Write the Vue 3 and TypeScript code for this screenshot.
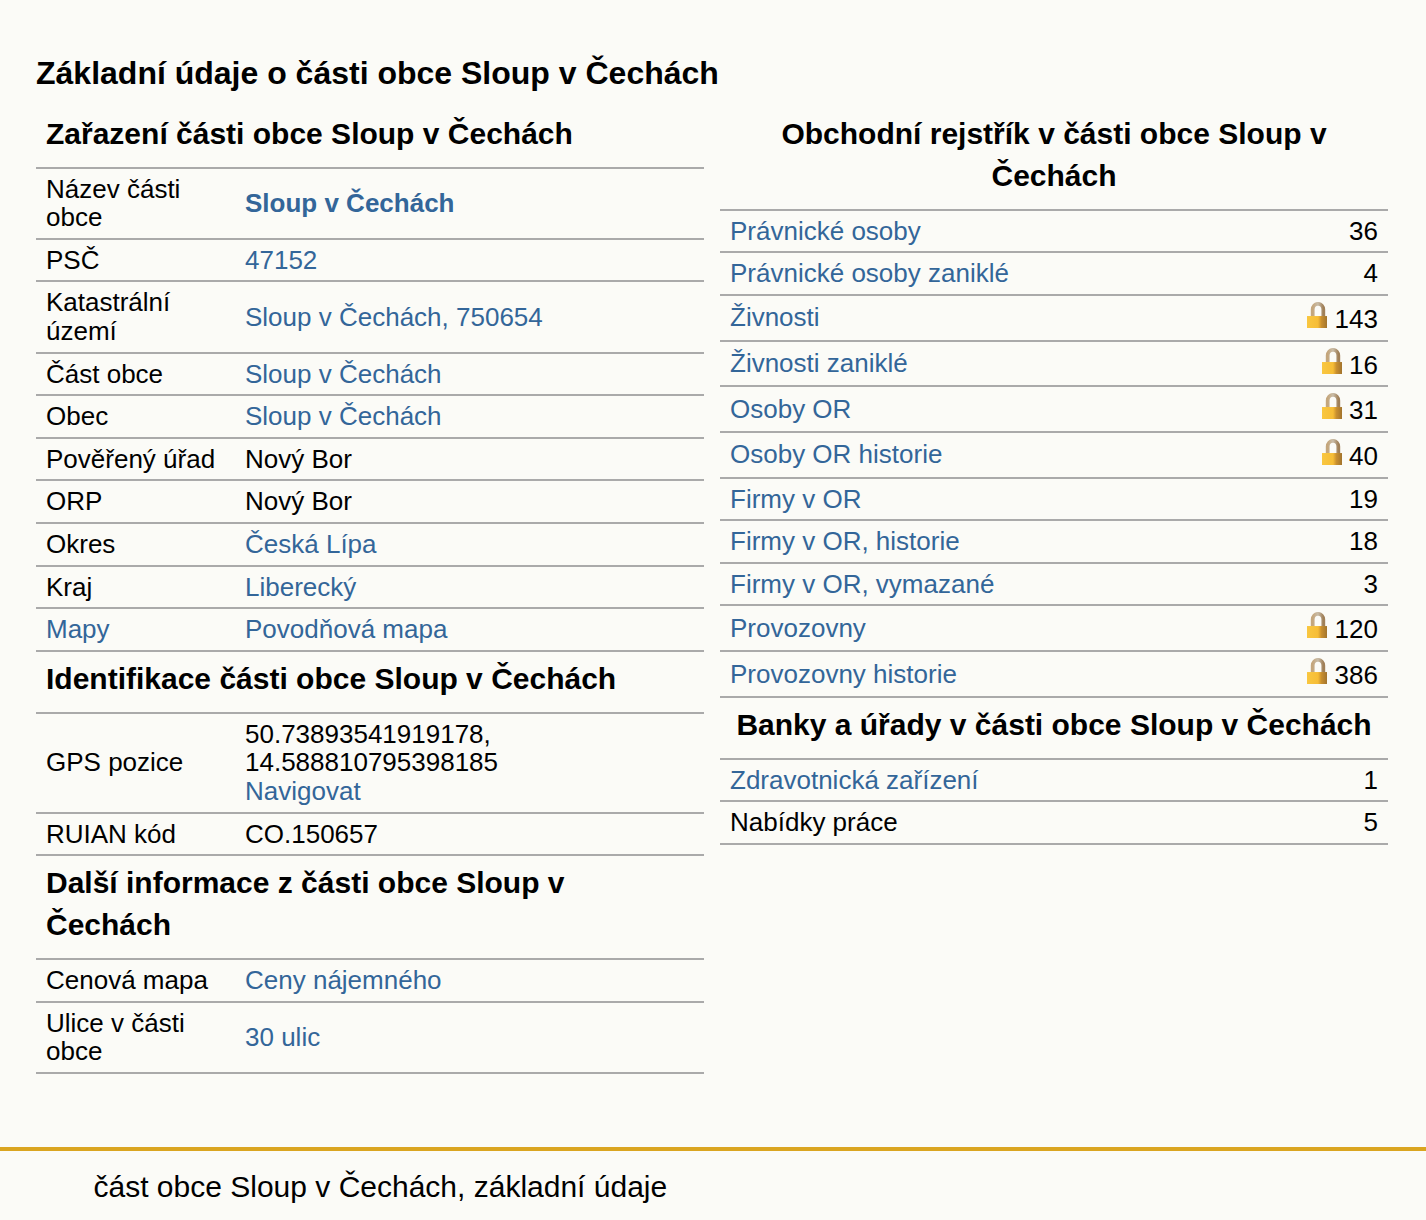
<script setup lang="ts">
type Row = { label: string; labelLink?: boolean; value: string; link?: boolean; bold?: boolean; extra?: string };
type Stat = { label: string; link?: boolean; count: number; lock?: boolean };

const zarazeni: Row[] = [
  { label: 'Název části obce', value: 'Sloup v Čechách', link: true, bold: true },
  { label: 'PSČ', value: '47152', link: true },
  { label: 'Katastrální území', value: 'Sloup v Čechách, 750654', link: true },
  { label: 'Část obce', value: 'Sloup v Čechách', link: true },
  { label: 'Obec', value: 'Sloup v Čechách', link: true },
  { label: 'Pověřený úřad', value: 'Nový Bor' },
  { label: 'ORP', value: 'Nový Bor' },
  { label: 'Okres', value: 'Česká Lípa', link: true },
  { label: 'Kraj', value: 'Liberecký', link: true },
  { label: 'Mapy', labelLink: true, value: 'Povodňová mapa', link: true },
];
const identifikace: Row[] = [
  { label: 'GPS pozice', value: '50.73893541919178, 14.588810795398185', extra: 'Navigovat' },
  { label: 'RUIAN kód', value: 'CO.150657' },
];
const dalsi: Row[] = [
  { label: 'Cenová mapa', value: 'Ceny nájemného', link: true },
  { label: 'Ulice v části obce', value: '30 ulic', link: true },
];
const rejstrik: Stat[] = [
  { label: 'Právnické osoby', link: true, count: 36 },
  { label: 'Právnické osoby zaniklé', link: true, count: 4 },
  { label: 'Živnosti', link: true, count: 143, lock: true },
  { label: 'Živnosti zaniklé', link: true, count: 16, lock: true },
  { label: 'Osoby OR', link: true, count: 31, lock: true },
  { label: 'Osoby OR historie', link: true, count: 40, lock: true },
  { label: 'Firmy v OR', link: true, count: 19 },
  { label: 'Firmy v OR, historie', link: true, count: 18 },
  { label: 'Firmy v OR, vymazané', link: true, count: 3 },
  { label: 'Provozovny', link: true, count: 120, lock: true },
  { label: 'Provozovny historie', link: true, count: 386, lock: true },
];
const banky: Stat[] = [
  { label: 'Zdravotnická zařízení', link: true, count: 1 },
  { label: 'Nabídky práce', count: 5 },
];
const groupsLeft = [
  { title: 'Zařazení části obce Sloup v Čechách', rows: zarazeni },
  { title: 'Identifikace části obce Sloup v Čechách', rows: identifikace },
  { title: 'Další informace z části obce Sloup v Čechách', rows: dalsi },
];
const groupsRight = [
  { title: 'Obchodní rejstřík v části obce Sloup v Čechách', rows: rejstrik },
  { title: 'Banky a úřady v části obce Sloup v Čechách', rows: banky },
];
</script>

<template>
  <div class="page">
    <main class="content">
      <h1>Základní údaje o části obce Sloup v Čechách</h1>
      <div class="columns">
        <table class="info">
          <colgroup><col class="c1" /><col /></colgroup>
          <tbody v-for="g in groupsLeft" :key="g.title">
            <tr class="head"><th colspan="2">{{ g.title }}</th></tr>
            <tr v-for="r in g.rows" :key="r.label">
              <td>
                <a v-if="r.labelLink" href="#">{{ r.label }}</a>
                <template v-else>{{ r.label }}</template>
              </td>
              <td>
                <a v-if="r.link" href="#" :class="{ strong: r.bold }">{{ r.value }}</a>
                <template v-else>{{ r.value }}</template>
                <template v-if="r.extra"><br /><a href="#">{{ r.extra }}</a></template>
              </td>
            </tr>
          </tbody>
        </table>
        <table class="stats">
          <colgroup><col /><col class="c2" /></colgroup>
          <tbody v-for="g in groupsRight" :key="g.title">
            <tr class="head center"><th colspan="2">{{ g.title }}</th></tr>
            <tr v-for="r in g.rows" :key="r.label">
              <td>
                <a v-if="r.link" href="#">{{ r.label }}</a>
                <template v-else>{{ r.label }}</template>
              </td>
              <td class="num">
                <svg v-if="r.lock" class="lock" viewBox="0 0 20 26" aria-hidden="true">
                  <defs>
                    <linearGradient id="body" x1="0" x2="1" y1="0" y2="0">
                      <stop offset="0" stop-color="#f9c740" />
                      <stop offset="0.55" stop-color="#f6bd36" />
                      <stop offset="0.72" stop-color="#c98f2e" />
                      <stop offset="1" stop-color="#a2742e" />
                    </linearGradient>
                    <linearGradient id="shackle" x1="0" x2="1" y1="0" y2="0">
                      <stop offset="0" stop-color="#c4a67c" />
                      <stop offset="0.5" stop-color="#c9bda9" />
                      <stop offset="1" stop-color="#a08058" />
                    </linearGradient>
                  </defs>
                  <path d="M5.7 14.5V7.5a5.3 5.7 0 0 1 10.6 0v7" fill="none" stroke="url(#shackle)" stroke-width="3.8" />
                  <rect x="0" y="14" width="20" height="12" fill="url(#body)" />
                </svg>
                {{ r.count }}
              </td>
            </tr>
          </tbody>
        </table>
      </div>
    </main>
    <footer class="foot">část obce Sloup v Čechách, základní údaje</footer>
  </div>
</template>

<style>
html, body { margin: 0; background: #fbfbf7; }
</style>

<style scoped>
.page {
  min-height: 1220px;
  display: flex;
  flex-direction: column;
  background: #fbfbf7;
  color: #000;
  font-family: "Liberation Sans", Arial, sans-serif;
  font-size: 26px;
  line-height: 1.1;
}
.content { flex: 1; padding: 52px 38px 0 36px; }
h1 { margin: 0 0 12.7px; font-size: 32px; line-height: 42px; font-weight: 700; }
.columns { display: flex; gap: 16px; align-items: flex-start; }
table { flex: 1 1 0; min-width: 0; border-collapse: collapse; table-layout: fixed; }
.c1 { width: 199px; }
.c2 { width: 152px; }
tr { border-bottom: 2px solid #aaa; }
th { padding: 6px 10px 12px; font-size: 30px; line-height: 42px; text-align: left; font-weight: 700; }
.center th { text-align: center; }
td { padding: 6px 10px; vertical-align: middle; }
.num { text-align: right; }
a { color: #369; text-decoration: none; }
.strong { font-weight: 700; }
.lock { width: 20px; height: 26.08px; vertical-align: baseline; }
.foot {
  border-top: 4px solid #daa520;
  padding: 18px 94px 0 93.5px;
  font-size: 30px;
  line-height: 36px;
  height: 73px;
  box-sizing: border-box;
}
</style>
